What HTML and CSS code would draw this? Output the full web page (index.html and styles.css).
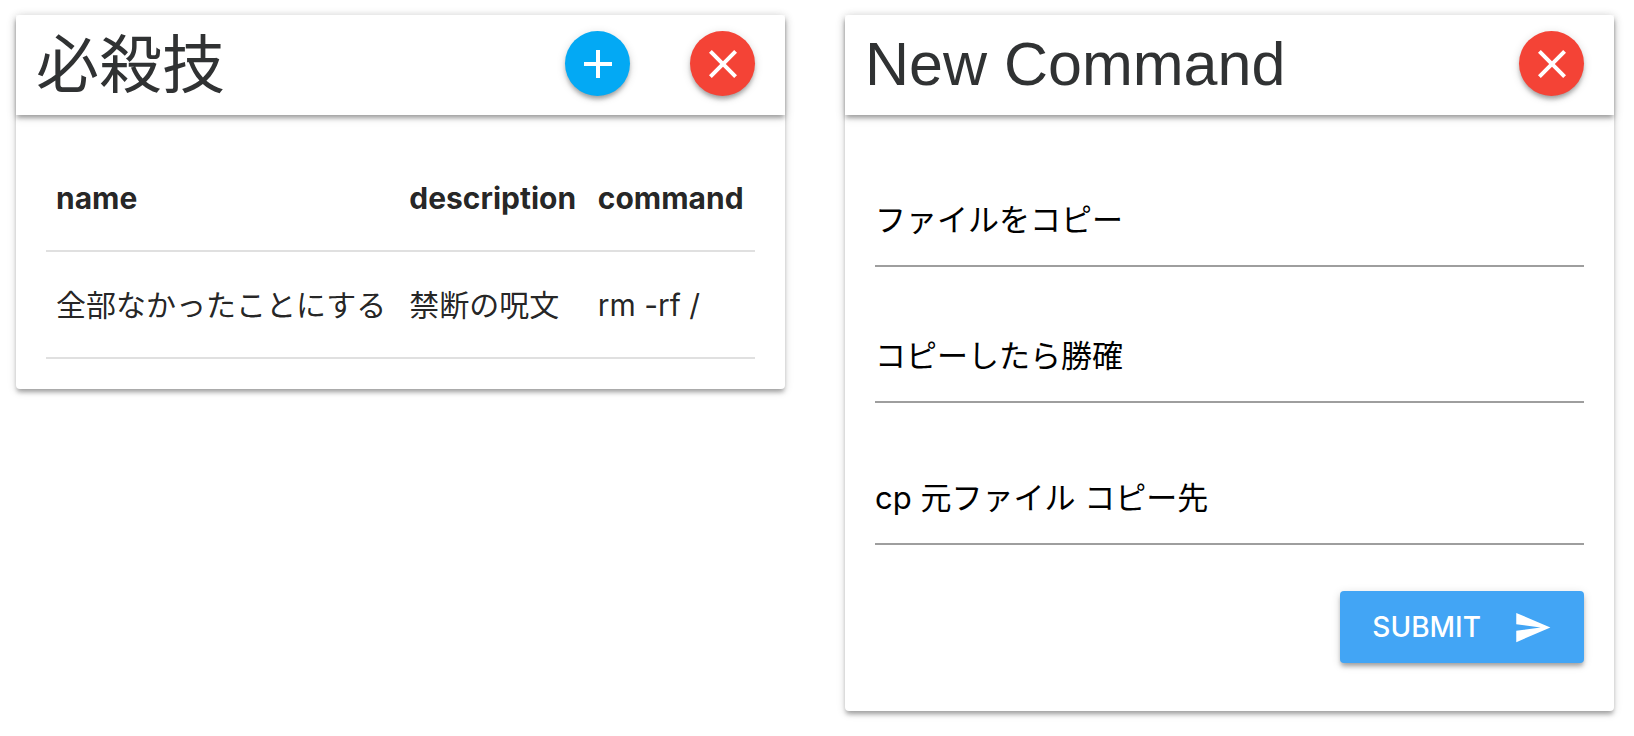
FILE: index.html
```html
<!DOCTYPE html>
<html lang="ja">
<head>
<meta charset="utf-8">
<meta name="viewport" content="width=device-width, initial-scale=1">
<title>必殺技</title>
<link rel="stylesheet" href="styles.css">
</head>
<body>
<main class="board">
  <section class="card">
    <header class="card-header">
      <h1 class="card-title">必殺技</h1>
      <div class="card-actions">
        <button type="button" class="fab fab-add" aria-label="Add">
          <svg class="fab-icon" viewBox="0 0 24 24" aria-hidden="true"><path d="M19 13h-6v6h-2v-6H5v-2h6V5h2v6h6v2z"/></svg>
        </button>
        <button type="button" class="fab fab-close" aria-label="Close">
          <svg class="fab-icon" viewBox="0 0 24 24" aria-hidden="true"><path d="M19 6.41L17.59 5 12 10.59 6.41 5 5 6.41 10.59 12 5 17.59 6.41 19 12 13.41 17.59 19 19 17.59 13.41 12z"/></svg>
        </button>
      </div>
    </header>
    <div class="card-content">
      <table class="commands">
        <thead>
          <tr><th scope="col">name</th><th scope="col">description</th><th scope="col">command</th></tr>
        </thead>
        <tbody>
          <tr><td>全部なかったことにする</td><td>禁断の呪文</td><td>rm -rf /</td></tr>
        </tbody>
      </table>
    </div>
  </section>

  <section class="card">
    <header class="card-header">
      <h2 class="card-title card-title-latin">New Command</h2>
      <div class="card-actions">
        <button type="button" class="fab fab-close" aria-label="Close">
          <svg class="fab-icon" viewBox="0 0 24 24" aria-hidden="true"><path d="M19 6.41L17.59 5 12 10.59 6.41 5 5 6.41 10.59 12 5 17.59 6.41 19 12 13.41 17.59 19 19 17.59 13.41 12z"/></svg>
        </button>
      </div>
    </header>
    <form class="card-content command-form">
      <input class="field" type="text" aria-label="name" value="ファイルをコピー">
      <input class="field" type="text" aria-label="description" value="コピーしたら勝確">
      <input class="field field-command" type="text" aria-label="command" value="cp 元ファイル コピー先">
      <button type="button" class="submit">SUBMIT
        <svg class="submit-icon" viewBox="0 0 24 24" aria-hidden="true"><path d="M2.01 21L23 12 2.01 3 2 10l15 2-15 2z"/></svg>
      </button>
    </form>
  </section>
</main>
</body>
</html>
```
FILE: styles.css
```css
:root {
  --shadow: 0 4px 4px rgba(0, 0, 0, .14), 0 2px 10px rgba(0, 0, 0, .14), 0 4px 4px -2px rgba(0, 0, 0, .2);
}

* {
  box-sizing: border-box;
}

body {
  margin: 0;
  background: #fff;
  color: rgba(0, 0, 0, .87);
  font-family: Inter, "Noto Sans CJK JP", sans-serif;
  font-size: 30px;
}

.board {
  display: grid;
  grid-template-columns: 1fr 1fr;
  align-items: start;
  gap: 60px;
  padding: 15px 20px 24px 16px;
}

.card {
  background: #fff;
  border-radius: 4px;
  box-shadow: var(--shadow);
}

.card-header {
  display: flex;
  align-items: flex-start;
  justify-content: space-between;
  height: 100px;
  padding: 0 30px 0 20px;
  box-shadow: var(--shadow);
}

.card-title {
  margin: 0;
  color: #303233;
  font-size: 63px;
  font-weight: 400;
  line-height: 98px;
  white-space: nowrap;
}

.card-title-latin {
  font-family: "Liberation Sans", "Noto Sans CJK JP", sans-serif;
  font-size: 61px;
}

.card-actions {
  display: flex;
  gap: 60px;
  padding-top: 16px;
}

.fab {
  display: grid;
  place-items: center;
  width: 65px;
  height: 65px;
  padding: 0;
  border: 0;
  border-radius: 50%;
  box-shadow: var(--shadow);
}

.fab-add {
  background: #03a9f4;
}

.fab-close {
  background: #f44336;
}

.fab-icon {
  width: 48px;
  height: 48px;
  fill: #fff;
}

.card-content {
  padding: 30px;
}

.commands {
  width: 100%;
  border-collapse: separate;
  border-spacing: 0;
  line-height: 36px;
  white-space: nowrap;
}

.commands th,
.commands td {
  height: 107px;
  padding: 0 10px;
  border-bottom: 2px solid #e0e0e0;
  text-align: left;
}

.commands th {
  font-weight: 700;
}

.command-form {
  display: flex;
  flex-direction: column;
  gap: 44px;
  padding: 60px 30px 48px;
}

.field {
  width: 100%;
  height: 92px;
  padding: 0 0 6px;
  border: 0;
  border-bottom: 2px solid #9e9e9e;
  outline: 0;
  background: transparent;
  color: #000;
  font-family: inherit;
  font-size: 31px;
}

.field-command {
  margin-top: 6px;
}

.submit {
  display: flex;
  align-items: center;
  align-self: flex-end;
  gap: 32px;
  height: 72px;
  margin-top: 2px;
  padding: 0 32px;
  border: 0;
  border-radius: 4px;
  background: #42a5f5;
  box-shadow: var(--shadow);
  color: #fff;
  font-family: inherit;
  font-size: 28px;
  font-weight: 500;
}

.submit-icon {
  width: 39px;
  height: 39px;
  fill: #fff;
}
```
